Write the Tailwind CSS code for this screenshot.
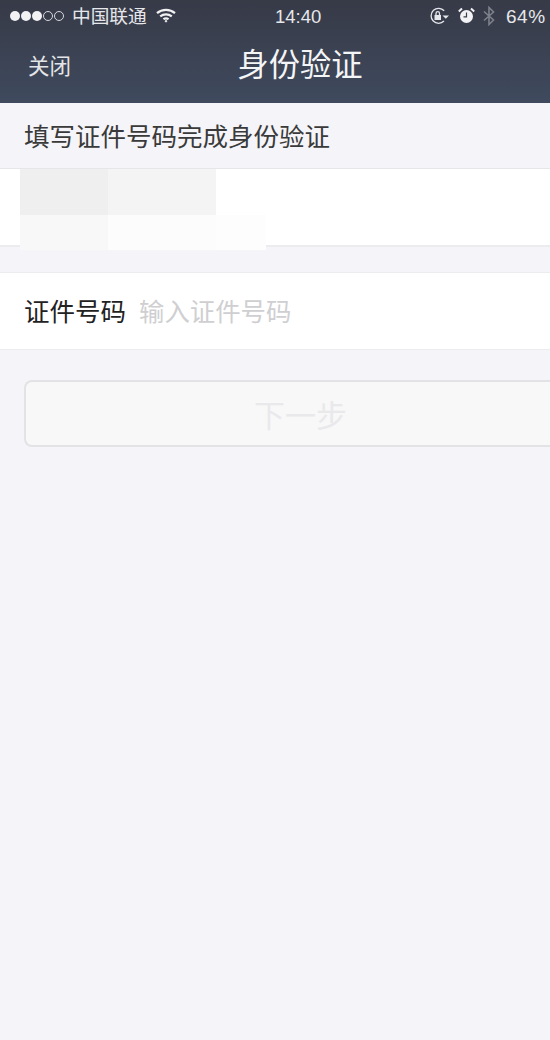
<!DOCTYPE html>
<html lang="zh-CN">
  <head>
    <meta charset="UTF-8" />
    <meta name="viewport" content="width=device-width, initial-scale=1.0" />
    <title>身份验证</title>
    <script src="https://cdn.jsdelivr.net/npm/@tailwindcss/browser@4"></script>
  </head>
  <body class="w-[550px] h-[1040px] overflow-hidden bg-[#f4f4f9] font-['Liberation_Sans','Noto_Sans_CJK_SC',sans-serif]">
    <!-- Header -->
    <header class="h-[103px] bg-gradient-to-b from-[#373a47] to-[#3f4a5e] text-white">
      <!-- Status bar -->
      <div class="h-[34px] flex items-center pl-[10px] text-[#e6e7ea] text-[18.7px]">
        <div class="flex items-center gap-[1px] w-[54px] mb-[2px]">
          <span class="w-[10px] h-[10px] rounded-full bg-[#f2f2f4]"></span>
          <span class="w-[10px] h-[10px] rounded-full bg-[#f2f2f4]"></span>
          <span class="w-[10px] h-[10px] rounded-full bg-[#f2f2f4]"></span>
          <span class="w-[10px] h-[10px] rounded-full border border-[#d8d9dd]"></span>
          <span class="w-[10px] h-[10px] rounded-full border border-[#d8d9dd]"></span>
        </div>
        <span class="ml-[8px] w-[75px] shrink-0">中国联通</span>
        <svg class="ml-[9px] mb-[3px] shrink-0" width="20" height="15" viewBox="0 0 20 15" fill="none" stroke="#f0f0f2" stroke-width="2.2">
          <path d="M1 5.2C6 .8 14 .8 19 5.2" />
          <path d="M4.2 8.4c3.4-2.8 8.2-2.8 11.6 0" />
          <path d="M7.4 11.2c1.6-1.1 3.6-1.1 5.2 0" />
          <circle cx="10" cy="13.2" r=".8" fill="#f0f0f2" stroke-width="1" />
        </svg>
        <span class="ml-[99px] w-[46px] shrink-0 text-center text-[18.5px]">14:40</span>
        <svg class="ml-[108px] mb-[3px] shrink-0" width="21" height="18" viewBox="0 0 21 18" fill="none" stroke="#e6e7ea" stroke-width="1.3">
          <path d="M15 14A7.500 7.500 0 1 1 15.200 3.800" />
          <rect x="5.500" y="8" width="6.500" height="5" fill="#e6e7ea" stroke="none" />
          <path d="M7 8V6.400a1.700 1.700 0 0 1 3.500 0V8" />
          <path d="M13.500 8.500h6.500l-3.200 3.200z" fill="#e6e7ea" stroke="none" />
        </svg>
        <svg class="ml-[8px] mb-[4px] shrink-0" width="17" height="17" viewBox="0 0 17 17">
          <circle cx="8.500" cy="9.500" r="6.500" fill="#f2f2f4" />
          <path d="M8.500 5.500v4.300h-3" fill="none" stroke="#3a3e4c" stroke-width="1.200" />
          <path d="M.8 4.500 4 1.500M16.200 4.500 13 1.500" stroke="#f2f2f4" stroke-width="2" />
        </svg>
        <svg class="ml-[8px] mb-[2px] shrink-0" width="12" height="20" viewBox="0 0 12 20" fill="none" stroke="#7d818c" stroke-width="1.600">
          <path d="M1 5.500 10.500 14 6 18.500V1.500L10.500 6 1 14.500" />
        </svg>
        <span class="ml-[11px] tracking-[0.5px] text-[19px] whitespace-nowrap">64%</span>
      </div>
      <!-- Nav bar -->
      <div class="relative h-[69px] flex items-center justify-center pl-[50px]">
        <span class="absolute left-[28px] top-[18px] text-[21.500px] leading-[30px] text-[#e4e5e8]">关闭</span>
        <h1 class="text-[31.300px] leading-[44px] text-[#f4f5f6] mb-[6px]">身份验证</h1>
      </div>
    </header>

    <!-- Instruction -->
    <div class="h-[66px] pl-[24px] pt-[4px] flex items-center text-[25.500px] text-[#3a3a3a] border-b border-[#e6e6ea]">填写证件号码完成身份验证</div>

    <!-- Blurred name / id block -->
    <section class="h-[78px] bg-white border-b-2 border-[#ececee] pl-[20px]">
      <div class="flex h-[46px]">
        <div class="w-[88px] bg-[#efefef]"></div>
        <div class="w-[108px] bg-[#f4f4f4]"></div>
      </div>
      <div class="flex h-[35px] relative">
        <div class="w-[88px] bg-[#f8f8f8]"></div>
        <div class="w-[108px] bg-[#fcfcfc]"></div>
        <div class="w-[50px] bg-[#fdfdfd]"></div>
      </div>
    </section>

    <!-- Id number field -->
    <section class="mt-[25px] h-[78px] bg-white border-y border-[#ececee] pl-[24px] flex items-center">
      <label class="text-[25.500px] text-[#222] pt-[2px]">证件号码</label>
      <input
        type="text"
        placeholder="输入证件号码"
        class="ml-[13px] flex-1 text-[25.400px] pt-[2px] outline-none placeholder:text-[#cfcfd2]"
      />
    </section>

    <!-- Next button runs off the right edge -->
    <div class="pt-[30px] pl-[24px]">
      <button
        disabled
        class="w-[526px] h-[67px] pt-[8px] flex items-center rounded-l-[8px] border-2 border-r-0 border-[#e3e3e5] bg-[#f8f8f9] text-[31px] text-[#e9e9eb]"
      >
        <span class="ml-[228px]">下一步</span>
      </button>
    </div>
  </body>
</html>
